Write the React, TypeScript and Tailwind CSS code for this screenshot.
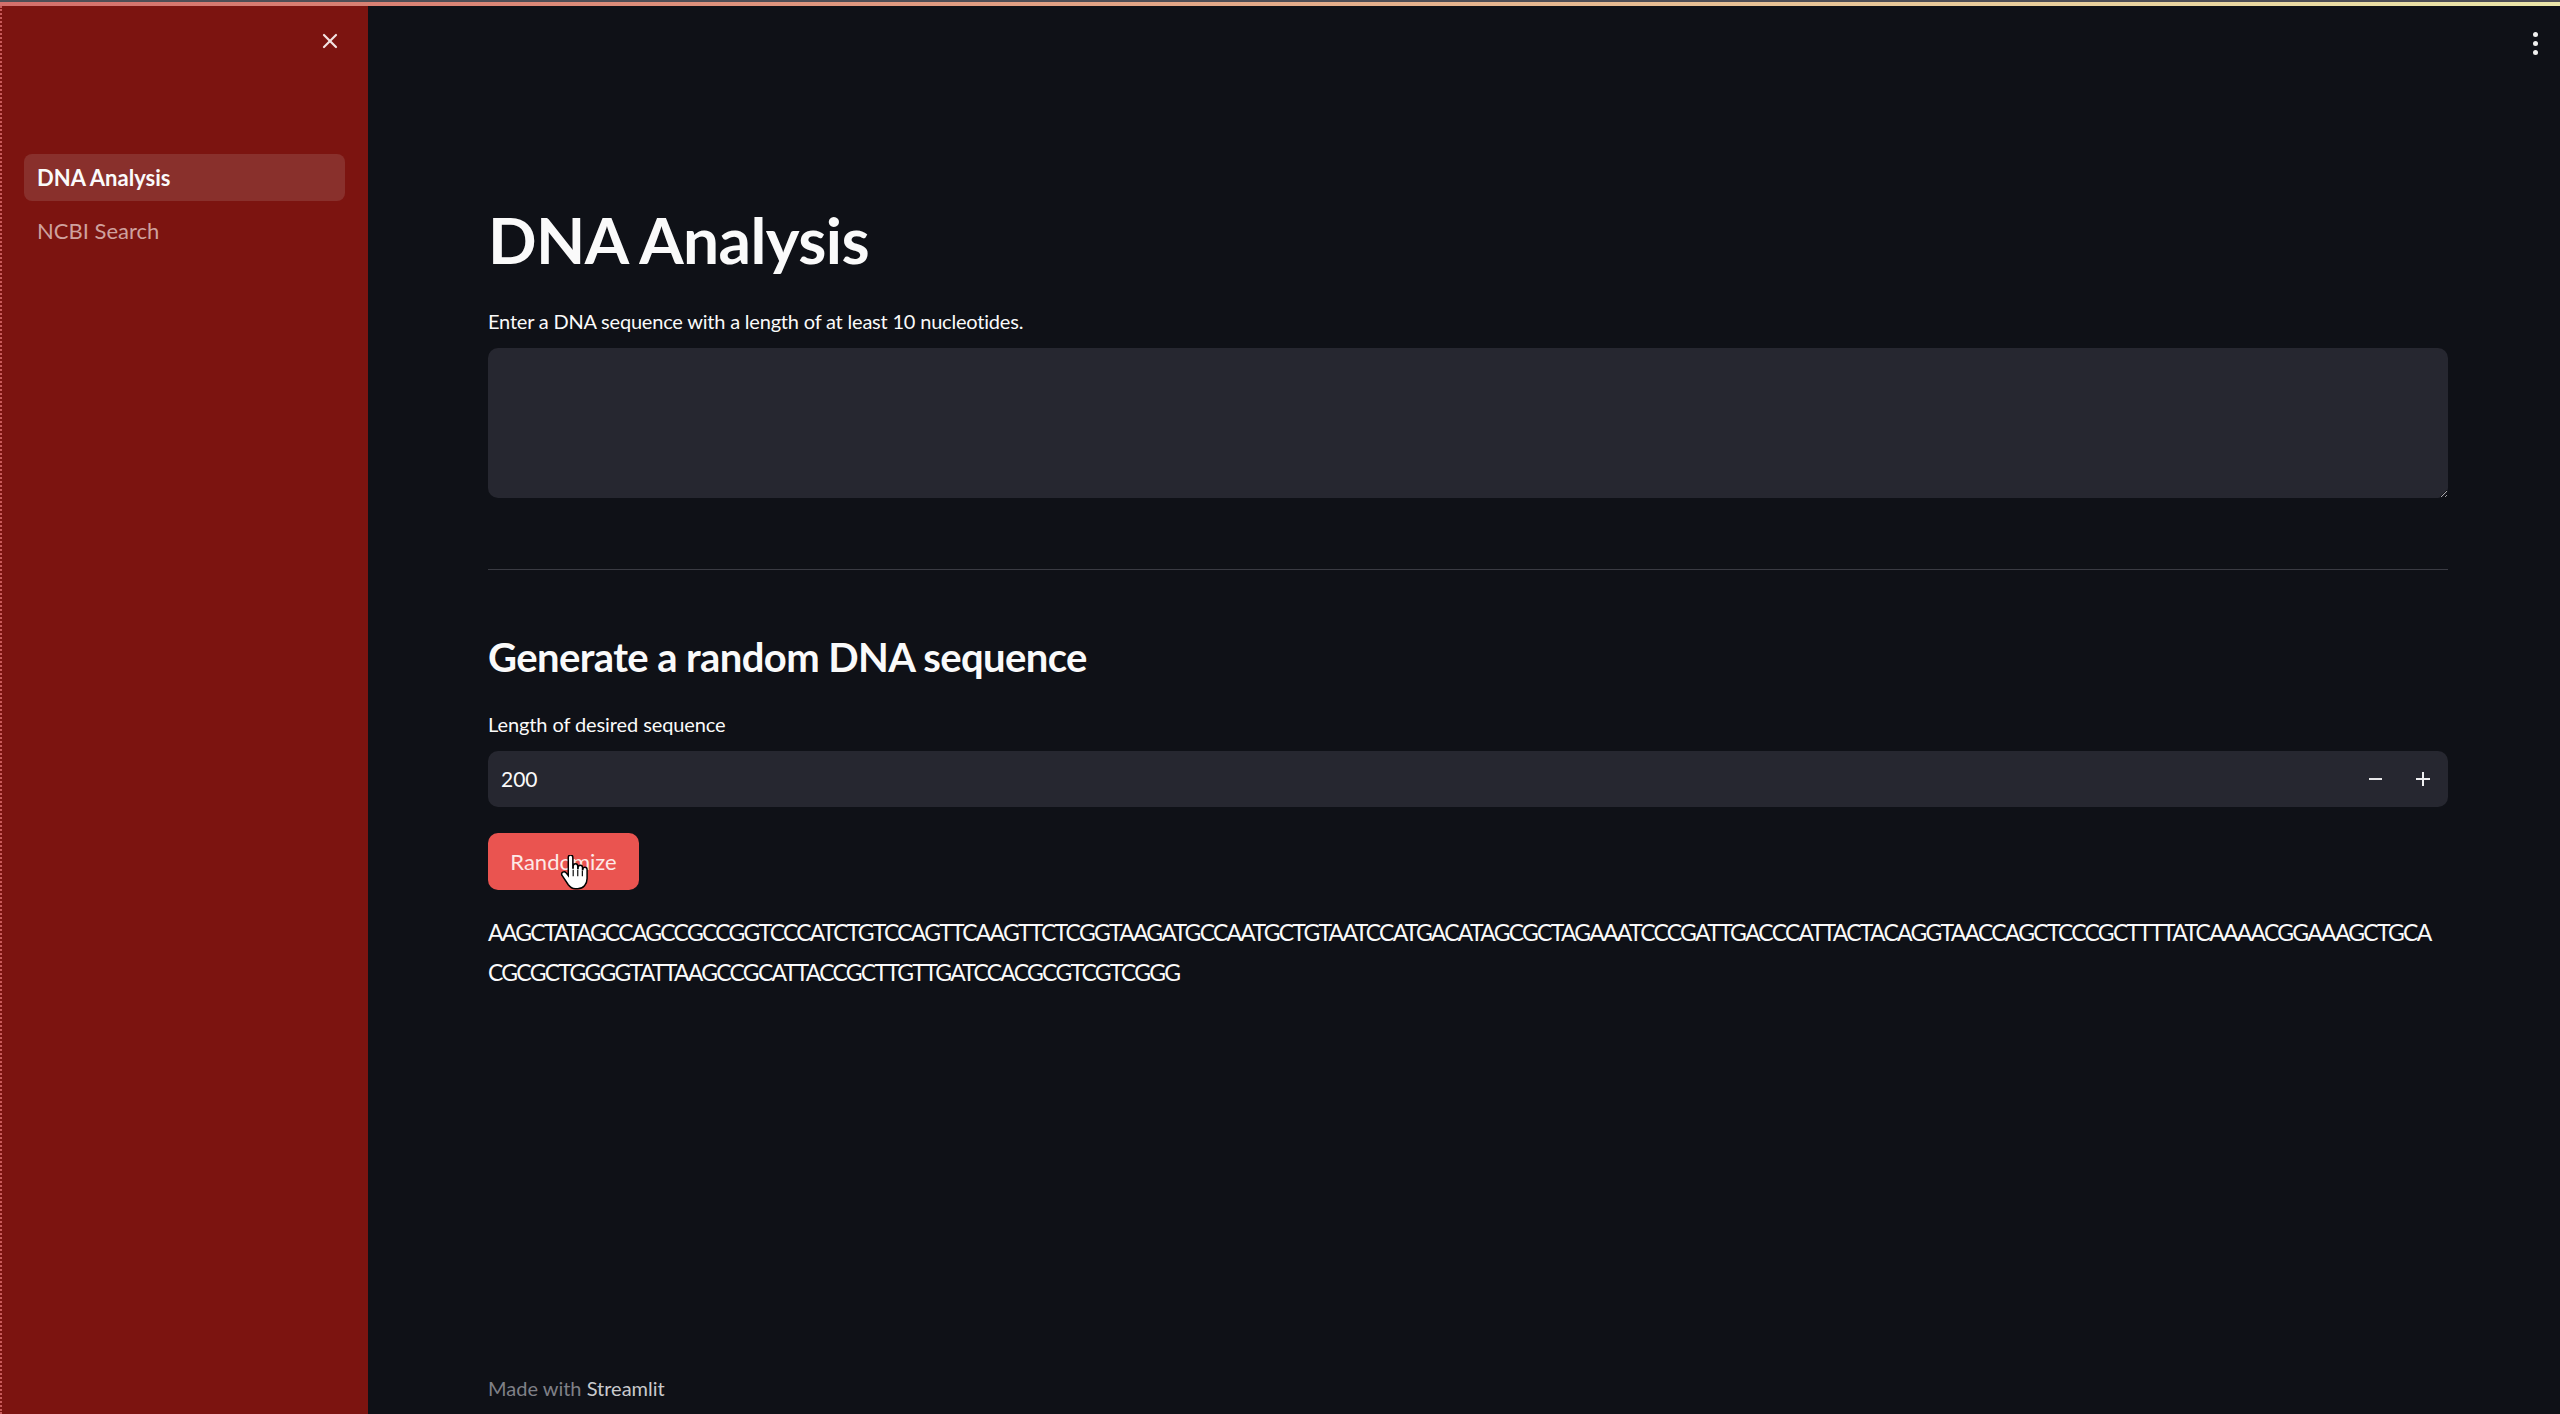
import React from "react";
import { X } from "lucide-react";

const LINE1 =
  "AAGCTATAGCCAGCCGCCGGTCCCATCTGTCCAGTTCAAGTTCTCGGTAAGATGCCAATGCTGTAATCCATGACATAGCGCTAGAAATCCCGATTGACCCATTACTACAGGTAACCAGCTCCCGCTTTTATCAAAACGGAAAGCTGCA";
const LINE2 = "CGCGCTGGGGTATTAAGCCGCATTACCGCTTGTTGATCCACGCGTCGTCGGG";

function Hand() {
  return (
    <svg width="28" height="36" viewBox="0 0 17 22" className="absolute left-[72px] top-[22px]">
      <path
        d="M5 1.5c0-.8.6-1.5 1.4-1.5S7.8.7 7.8 1.5V8h.2V6.8c0-.8.6-1.4 1.4-1.4s1.4.6 1.4 1.4V8.3h.2V7.6c0-.8.6-1.4 1.4-1.4s1.3.6 1.3 1.4v1.2h.2c0-.8.6-1.3 1.3-1.3s1.3.6 1.3 1.4v5.5c0 3.5-2.3 6.2-5.7 6.2H9.3c-2 0-3.2-.9-4.3-2.4L1.2 12.5c-.5-.7-.3-1.6.4-2 .6-.4 1.5-.3 2 .3L5 12.6V1.5z"
        fill="white"
        stroke="black"
        strokeWidth="0.9"
      />
      <path d="M8 9v4M10.8 9v4M13.6 9.5v3.5" stroke="black" strokeWidth="0.7" />
    </svg>
  );
}

export default function App() {
  return (
    <div
      className="w-[2560px] h-[1414px] flex flex-col bg-[#0f1117] overflow-hidden text-[#fafafa]"
      style={{ fontFamily: "Lato, 'Noto Sans', sans-serif" }}
    >
      <div className="h-[2px] bg-[#4e4e56]" />
      <div className="h-[4px] bg-gradient-to-r from-[#d46f6b] to-[#ebe6a9]" />
      <div className="flex flex-1 min-h-0">
        {/* Sidebar */}
        <aside className="w-[368px] shrink-0 bg-[#7c1410] border-l-2 border-dotted border-[#c85a5a] flex flex-col">
          <div className="h-[70px] flex justify-end items-start pt-[23px] pr-[26px]">
            <X size={24} strokeWidth={2.2} color="#f3e3e2" />
          </div>
          <nav className="flex flex-col gap-[6px] pl-[22px] pr-[23px] mt-[78px]">
            <div className="h-[47px] rounded-[8px] bg-[#89302c] flex items-center pl-[13px] text-[22px] font-bold text-[#fafafa]">
              DNA Analysis
            </div>
            <div className="h-[47px] rounded-[8px] flex items-center pl-[13px] text-[22px] text-[#cfa19e]">
              NCBI Search
            </div>
          </nav>
        </aside>

        {/* Main */}
        <main className="relative flex-1 min-w-0 flex flex-col pl-[120px] pr-[112px]">
          <div className="absolute right-[22px] top-[26px] flex flex-col gap-[4px]">
            <div className="w-[5px] h-[5px] rounded-full bg-[#f0f0f0]" />
            <div className="w-[5px] h-[5px] rounded-full bg-[#f0f0f0]" />
            <div className="w-[5px] h-[5px] rounded-full bg-[#f0f0f0]" />
          </div>

          <h1 className="mt-[194px] h-[80px] leading-[80px] text-[64px] font-bold tracking-[-0.6px]">
            DNA Analysis
          </h1>
          <div className="mt-[27px] h-[28px] leading-[28px] text-[20px] tracking-[-0.2px] text-[#fafafa]">
            Enter a DNA sequence with a length of at least 10 nucleotides.
          </div>
          <textarea
            className="mt-[13px] h-[150px] w-full rounded-[10px] bg-[#262730] outline-none resize-y"
            defaultValue=""
          />
          <div className="mt-[71px] h-[1px] bg-[#3a3b43]" />

          <h3 className="mt-[61px] h-[52px] leading-[52px] text-[40px] font-bold tracking-[-0.6px]">
            Generate a random DNA sequence
          </h3>
          <div className="mt-[27px] h-[28px] leading-[28px] text-[20px] tracking-[-0.1px]">
            Length of desired sequence
          </div>
          <div className="mt-[13px] h-[56px] rounded-[10px] bg-[#262730] flex items-center">
            <div className="flex-1 pl-[13px] text-[21px]">200</div>
            <div className="w-[48px] flex justify-center">
              <div className="w-[13px] h-[2px] bg-[#e8e8ea]" />
            </div>
            <div className="w-[48px] mr-[1px] flex justify-center items-center relative">
              <div className="w-[14px] h-[2px] bg-[#f0f0f2]" />
              <div className="absolute w-[2px] h-[14px] bg-[#f0f0f2]" />
            </div>
          </div>

          <div className="mt-[26px]">
            <div className="relative w-[151px] h-[57px] rounded-[10px] bg-[#ea5450] flex items-center justify-center text-[22px] text-[#fde9e7]">
              Randomize
              <Hand />
            </div>
          </div>

          <div className="mt-[22px] text-[23px] leading-[40px] whitespace-nowrap text-[#fafafa] tracking-[-1.75px]">
            <div>{LINE1}</div>
            <div>{LINE2}</div>
          </div>

          <div className="mt-auto mb-[12px] h-[28px] leading-[28px] text-[20px] text-[#7f8087]">
            Made with <span className="text-[#c9cacd]">Streamlit</span>
          </div>
        </main>
      </div>
    </div>
  );
}
